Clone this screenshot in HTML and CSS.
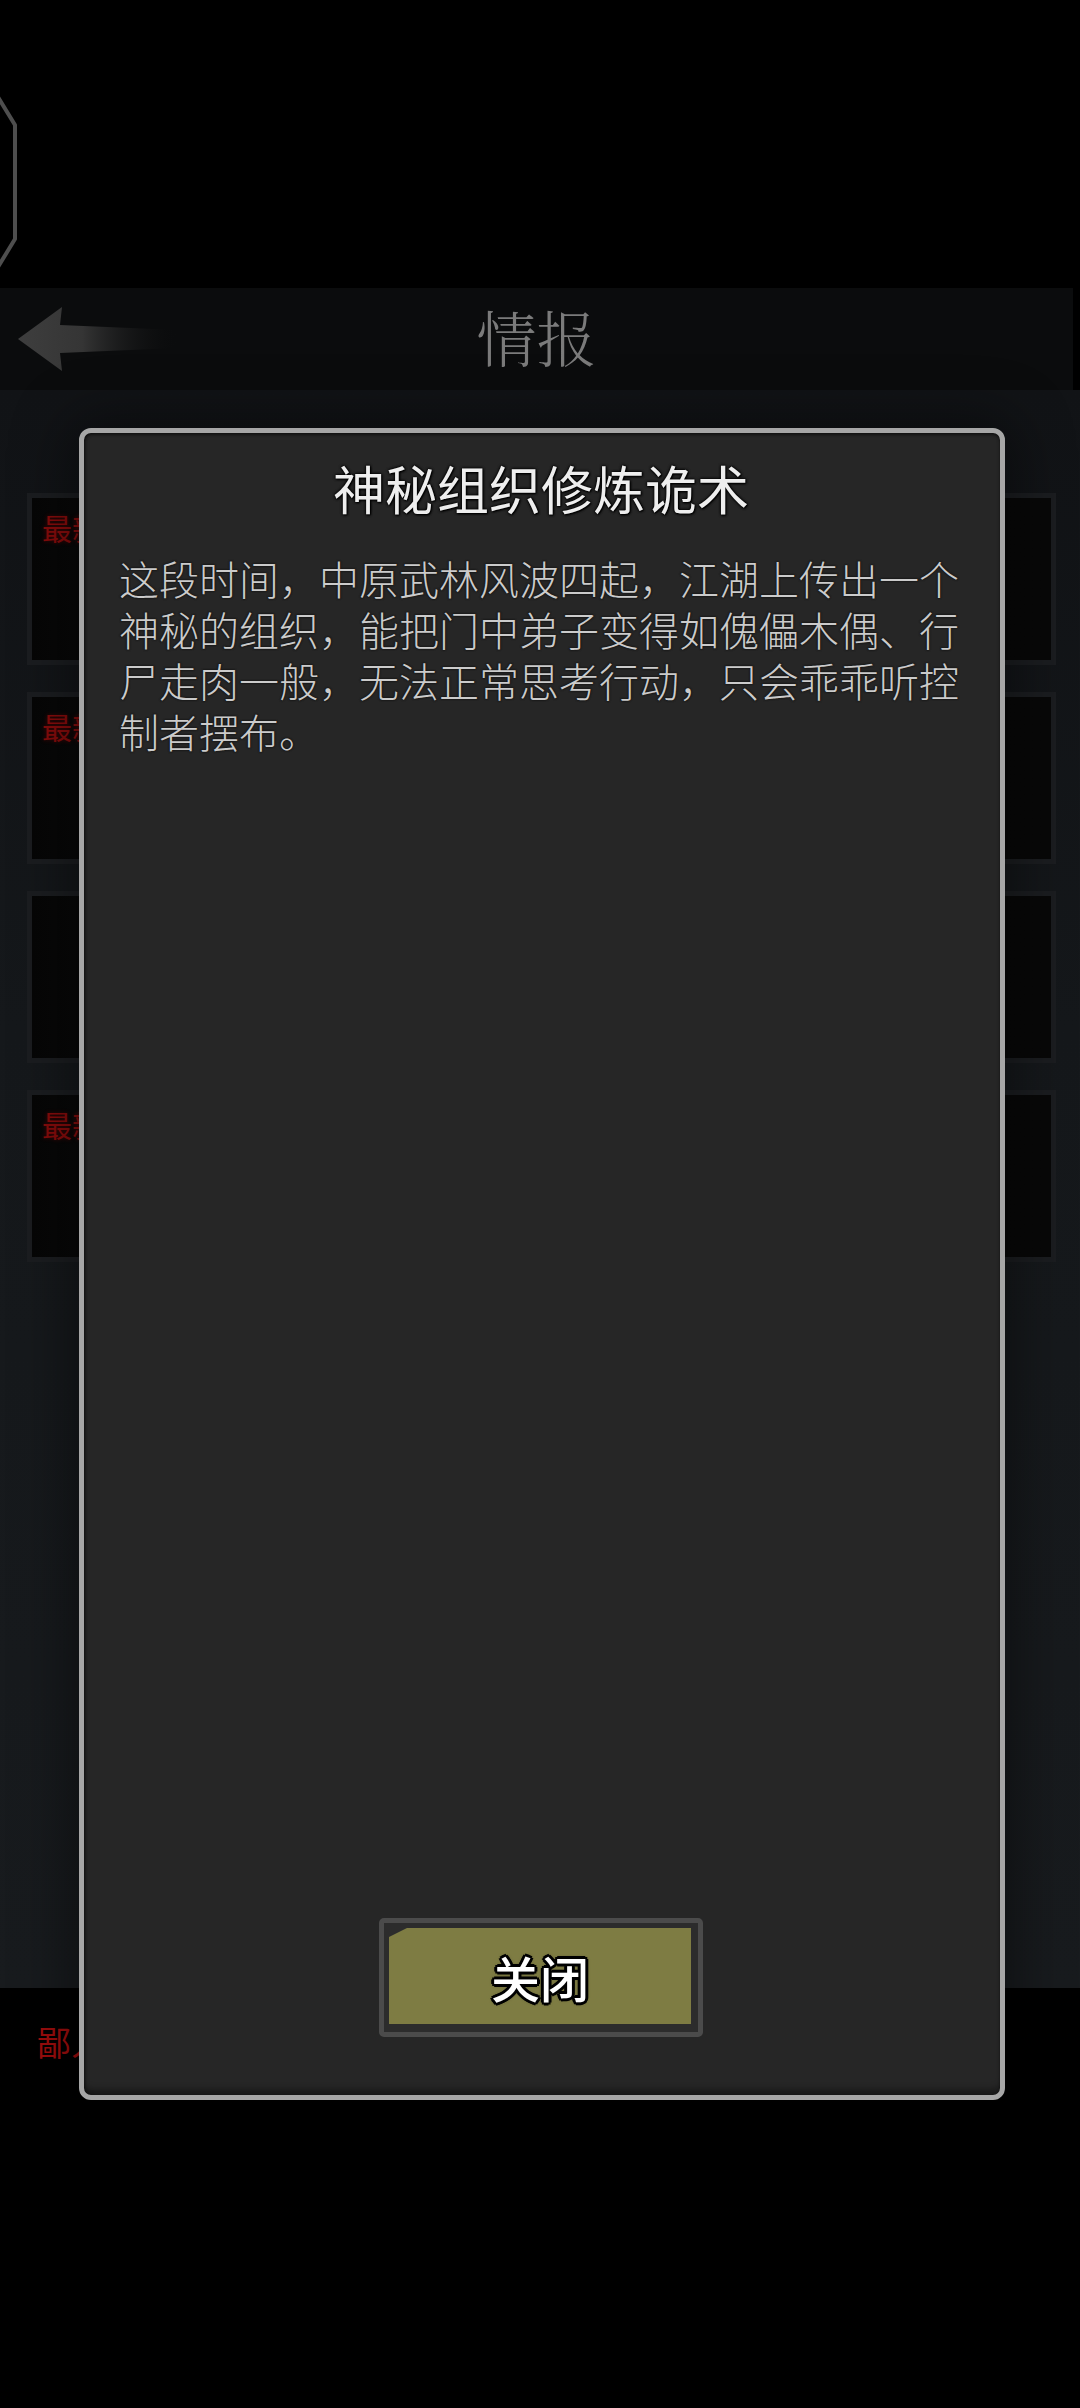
FILE: index.html
```html
<!DOCTYPE html>
<html lang="zh-CN">
<head>
<meta charset="utf-8">
<title>情报</title>
<link rel="stylesheet" href="styles.css">
</head>
<body>
<div class="screen">
  <div class="status">
    <svg class="side-tab" viewBox="0 0 20 174" aria-hidden="true">
      <polyline points="-2,2 15,30 15,144 -2,172" />
    </svg>
  </div>

  <header class="titlebar">
    <svg class="back" viewBox="0 0 180 102" aria-label="返回">
      <defs>
        <linearGradient id="arrowFade" x1="0" x2="1" y1="0" y2="0">
          <stop offset="0" stop-color="#3e3e3e"/>
          <stop offset="0.4" stop-color="#353535"/>
          <stop offset="1" stop-color="#0b0c0d" stop-opacity="0"/>
        </linearGradient>
      </defs>
      <path d="M18 51 L62 19 L60 37 L178 42 L178 60 L60 65 L62 83 Z" fill="url(#arrowFade)"/>
    </svg>
    <h1 class="titlebar-name">情报</h1>
    <span class="titlebar-end"></span>
  </header>

  <main class="page">
    <ul class="news">
      <li class="news-item"><span class="news-tag">最新</span></li>
      <li class="news-item"><span class="news-tag">最新</span></li>
      <li class="news-item"></li>
      <li class="news-item"><span class="news-tag">最新</span></li>
    </ul>
  </main>

  <footer class="foot">
    <span class="foot-note">鄙人</span>
  </footer>

  <div class="dialog" role="dialog">
    <h2 class="dialog-title">神秘组织修炼诡术</h2>
    <p class="dialog-text">这段时间，中原武林风波四起，江湖上传出一个神秘的组织，能把门中弟子变得如傀儡木偶、行尸走肉一般，无法正常思考行动，只会乖乖听控制者摆布。</p>
    <button class="dialog-close" type="button"><span class="close-face">关闭</span></button>
  </div>
</div>
</body>
</html>
```

FILE: styles.css
```css
* {
  box-sizing: border-box;
  margin: 0;
  padding: 0;
}

html,
body {
  background: #000;
}

body {
  width: 1080px;
  height: 2408px;
  overflow: hidden;
  font-family: "Noto Sans CJK SC", "Noto Sans", sans-serif;
}

.screen {
  position: relative;
  width: 1080px;
  height: 2408px;
  display: flex;
  flex-direction: column;
}

/* black strip above the title bar */
.status {
  position: relative;
  height: 288px;
  flex: none;
}

.side-tab {
  position: absolute;
  left: 0;
  top: 95px;
  width: 20px;
  height: 174px;
  overflow: visible;
}

.side-tab polyline {
  fill: none;
  stroke: #4e4e4e;
  stroke-width: 4;
  stroke-linejoin: round;
}

/* title bar */
.titlebar {
  height: 102px;
  flex: none;
  background: #0b0c0d;
  display: grid;
  grid-template-columns: 1fr auto 1fr;
  align-items: center;
  margin-right: 7px;
}

.back {
  display: block;
  width: 180px;
  height: 102px;
}

.titlebar-name {
  font-family: "Noto Serif CJK SC", "Noto Sans CJK SC", serif;
  font-weight: 300;
  font-size: 60px;
  line-height: 1;
  color: #7b7b7b;
  padding-bottom: 6px;
}

/* list behind the dialog */
.page {
  height: 1598px;
  flex: none;
  background: linear-gradient(180deg, #111316 0%, #15181b 40%, #181b1e 100%);
  padding: 103px 24px 0 27px;
}

.news {
  list-style: none;
  display: flex;
  flex-direction: column;
  gap: 27px;
}

.news-item {
  height: 172px;
  border: 5px solid #1b1d20;
  background: linear-gradient(90deg, #060606 0%, #0b0c0c 12%, #070707 30%, #080808 100%);
  padding: 12px 10px;
}

.news-tag {
  font-size: 30px;
  line-height: 34px;
  color: #870c0c;
  text-shadow: 0 0 4px rgba(150, 0, 0, 0.45);
}

.foot {
  flex: 1;
  padding: 34px 0 0 37px;
}

.foot-note {
  font-size: 34px;
  line-height: 40px;
  color: #9e0d0d;
}

/* modal dialog */
.dialog {
  position: absolute;
  left: 79px;
  top: 428px;
  width: 926px;
  height: 1672px;
  background: #262626;
  border: 5px solid #a6a6a6;
  border-radius: 12px;
  box-shadow:
    0 0 60px 8px rgba(0, 0, 0, 0.45),
    inset 0 -9px 6px -3px rgba(0, 0, 0, 0.35),
    inset 0 2px 3px rgba(0, 0, 0, 0.5),
    inset 3px 0 4px -2px rgba(0, 0, 0, 0.4);
  display: flex;
  flex-direction: column;
  align-items: center;
  padding: 25px 37px 58px 35px;
}

.dialog-title {
  font-size: 52px;
  line-height: 60px;
  font-weight: 400;
  color: #eeeeee;
  text-shadow:
    0 0 3px #000,
    0 0 3px #000,
    1px 1px 2px #000;
}

.dialog-text {
  align-self: stretch;
  margin-top: 35px;
  font-size: 40px;
  line-height: 51px;
  font-weight: 300;
  color: #cbcbcb;
  text-shadow:
    0 0 2px #111,
    0 0 2px #111;
}

.dialog-close {
  margin-top: auto;
  width: 324px;
  height: 119px;
  border: 5px solid #4b4b4b;
  border-radius: 5px;
  background: #2c2c2c;
  padding: 5px 7px 8px 5px;
  font: inherit;
  cursor: pointer;
}

.close-face {
  display: flex;
  align-items: center;
  justify-content: center;
  width: 100%;
  height: 100%;
  background: #7e7c43;
  clip-path: polygon(0 9px, 18px 0, 100% 0, 100% 100%, 0 100%);
  font-size: 49px;
  font-weight: 500;
  color: #fff;
  text-shadow:
    -3px 0 0 #000,
    3px 0 0 #000,
    0 -3px 0 #000,
    0 3px 0 #000,
    -2px -2px 0 #000,
    2px -2px 0 #000,
    -2px 2px 0 #000,
    2px 2px 0 #000,
    0 0 4px #000;
}
```
